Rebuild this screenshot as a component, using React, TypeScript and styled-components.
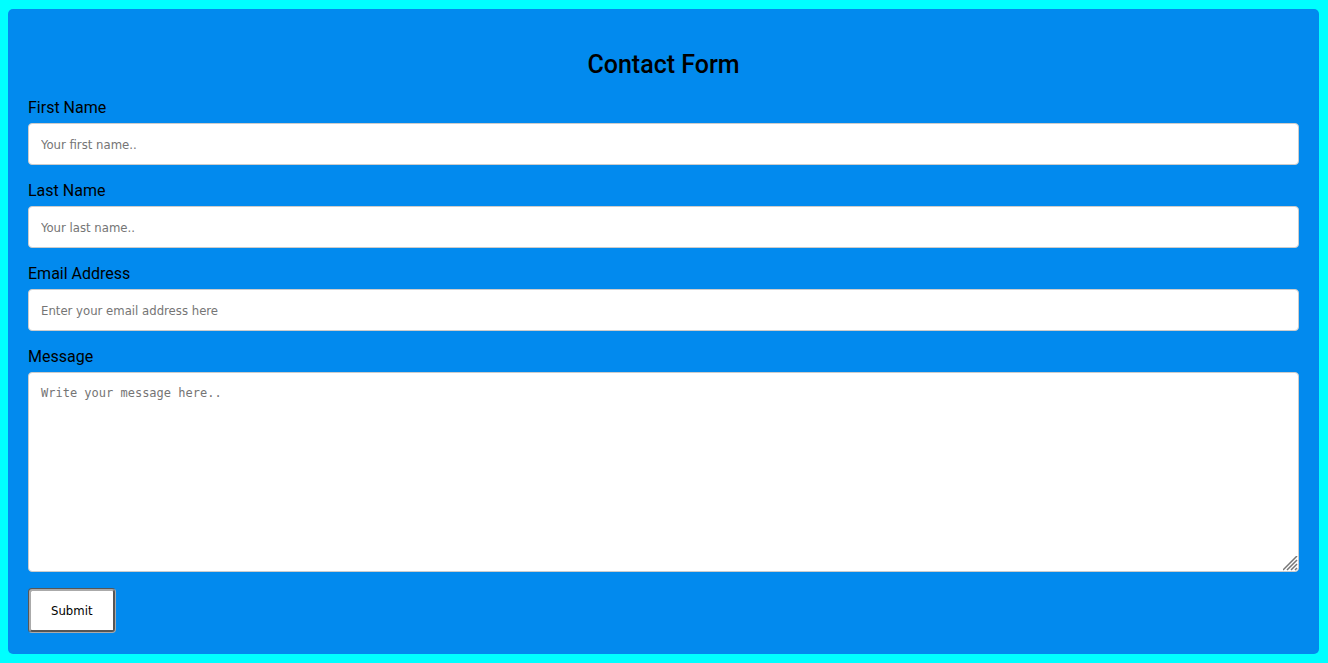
import React from "react";
import styled, { createGlobalStyle, css } from "styled-components";

const GlobalStyle = createGlobalStyle`
  body {
    margin: 9px 9px 9px 8px;
    background: #00ffff;
    color: #000;
    font-family: Roboto, sans-serif;
    font-size: 16px;
    line-height: 19px;
  }
  *, *::before, *::after { box-sizing: border-box; }
`;

const Card = styled.main`
  padding: 40px 20px 21px;
  border-radius: 5px;
  background: #028aee;
`;

const Title = styled.h1`
  margin: 0 0 18px;
  font-size: 25px;
  line-height: 31px;
  font-weight: 500;
  text-align: center;
`;

const Label = styled.label`
  display: block;
`;

const field = css`
  display: block;
  width: 100%;
  margin: 6px 0 16px;
  padding: 12px;
  border: 1px solid #ccc;
  border-radius: 4px;
  background: #fff;
  &::placeholder { color: #757575; }
`;

const TextInput = styled.input`
  ${field}
  height: 42px;
  font: 13px "DejaVu Sans Condensed", "DejaVu Sans", sans-serif;
`;

const grip = `url("data:image/svg+xml,%3Csvg xmlns='http://www.w3.org/2000/svg' width='15' height='15'%3E%3Cpath d='M0 14L14 0M4 14L14 4M8 14L14 8M12 14L14 12' stroke='%23777' stroke-width='1.5'/%3E%3C/svg%3E")`;

const MessageBox = styled.textarea`
  ${field}
  height: 200px;
  font: 12px/17px "DejaVu Sans Mono", monospace;
  resize: vertical;
  &::-webkit-resizer {
    background: ${grip} no-repeat;
  }
`;

const SubmitButton = styled.button`
  display: block;
  height: 45px;
  padding: 12px 20px;
  border: 3px groove #aaa;
  border-radius: 4px;
  background: #fff;
  color: #000;
  font: 13px "DejaVu Sans Condensed", "DejaVu Sans", sans-serif;
  cursor: pointer;
`;

const fields = [
  { id: "fname", label: "First Name", type: "text", placeholder: "Your first name.." },
  { id: "lname", label: "Last Name", type: "text", placeholder: "Your last name.." },
  { id: "email", label: "Email Address", type: "email", placeholder: "Enter your email address here" },
];

export default function App() {
  return (
    <>
      <GlobalStyle />
      <Card>
        <Title>Contact Form</Title>
        <form onSubmit={(e: React.FormEvent) => e.preventDefault()}>
          {fields.map((f) => (
            <React.Fragment key={f.id}>
              <Label htmlFor={f.id}>{f.label}</Label>
              <TextInput id={f.id} name={f.id} type={f.type} placeholder={f.placeholder} />
            </React.Fragment>
          ))}
          <Label htmlFor="message">Message</Label>
          <MessageBox id="message" name="message" placeholder="Write your message here.." />
          <SubmitButton type="submit">Submit</SubmitButton>
        </form>
      </Card>
    </>
  );
}
